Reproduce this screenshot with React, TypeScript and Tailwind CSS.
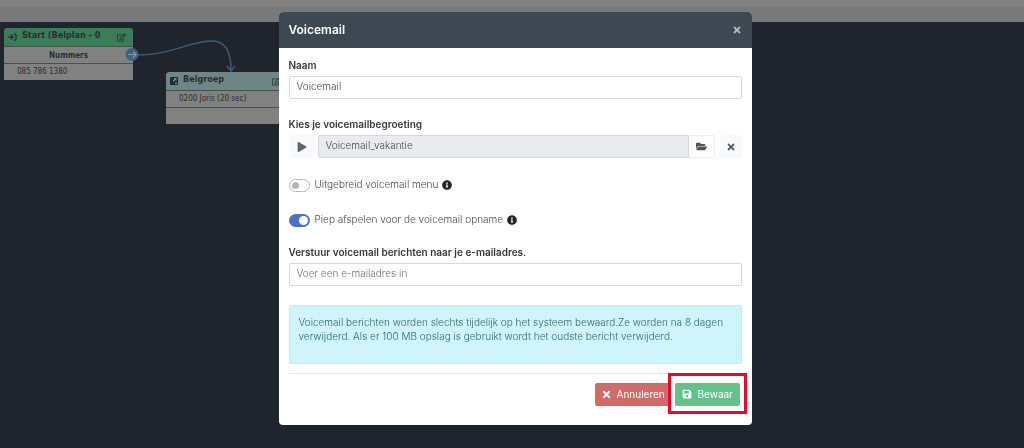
import React, { useState } from "react";
import { FaFolderOpen, FaInfoCircle, FaPlay, FaRegEdit, FaSave, FaTimes } from "react-icons/fa";

interface FlowNodeProps {
    title: string;
    icon: React.ReactNode;
    rows: string[];
    heading?: string;
    headerClass: string;
    className?: string;
}

function FlowNode({ title, icon, rows, heading, headerClass, className = "" }: FlowNodeProps) {
    return (
        <section className={`absolute overflow-hidden rounded-t-sm bg-[#818181] text-[#2a2e32] ${className}`}>
            <header className={`flex h-[18px] items-center gap-[5px] px-1 ${headerClass}`}>
                {icon}
                <h3 className="flex-1 truncate pb-0.5 text-[9px] font-bold">{title}</h3>
                <button type="button" aria-label={`${title} bewerken`} className="px-[3px]">
                    <FaRegEdit className="size-[9px]" />
                </button>
            </header>
            {heading && (
                <div className="h-[17px] border-t border-[#4c4f52] text-center text-[8px] leading-[17px] font-bold">{heading}</div>
            )}
            {rows.map((row, i) => (
                <div key={i} className="h-[17px] border-t border-[#4c4f52] pl-[13px] text-[8px] leading-4">
                    {row}
                </div>
            ))}
        </section>
    );
}

function StartIcon() {
    return (
        <svg viewBox="0 0 18 16" className="h-2 w-[9px] shrink-0" fill="none" stroke="currentColor" strokeWidth="2.5" aria-hidden="true">
            <path d="M0 8h10M5 3l5 5l-5 5M11 2h3a2 2 0 0 1 2 2v8a2 2 0 0 1-2 2h-3" />
        </svg>
    );
}

function GroupIcon() {
    return (
        <svg viewBox="0 0 16 16" className="size-2 shrink-0" aria-hidden="true">
            <rect width="16" height="16" rx="2" fill="#1d2a2e" />
            <path d="M13 2v6l-2-2l-4 4l-2-2l4-4l-2-2z" fill="#6f8f8e" />
            <path d="M10 11h4v3h-4z" fill="#6f8f8e" />
        </svg>
    );
}

function FlowCanvas() {
    return (
        <div className="relative flex-1 overflow-hidden bg-[#20252d] font-['DejaVu_Sans_Condensed','DejaVu_Sans',sans-serif]">
            <FlowNode
                title="Start (Belplan - 0"
                icon={<StartIcon />}
                heading="Nummers"
                rows={["085 786 1380"]}
                headerClass="bg-[#3b7d58]"
                className="top-[6px] left-1 w-[129px]"
            />
            <FlowNode
                title="Belgroep"
                icon={<GroupIcon />}
                rows={["0200 Joris (20 sec)", ""]}
                headerClass="bg-[#6c8785]"
                className="top-[50px] left-[166px] w-[122px]"
            />
            <svg className="absolute top-0 left-0 h-[60px] w-[280px]" fill="none" aria-hidden="true">
                <path d="M138 33C172 33 190 19 212 19C226 19 231 31 231 48" stroke="#3c5a7c" strokeWidth="1.5" />
                <path d="M227 44l4 5l4-5" stroke="#3c5a7c" strokeWidth="1.5" />
                <circle cx="132" cy="32.5" r="6.5" fill="#40607f" />
                <path d="M128 32.5h8M133 29.5l3 3l-3 3" stroke="#8798a8" strokeWidth="1.2" />
            </svg>
        </div>
    );
}

interface SwitchRowProps {
    id: string;
    label: string;
    checked: boolean;
    onChange: (checked: boolean) => void;
}

function SwitchRow({ id, label, checked, onChange }: SwitchRowProps) {
    return (
        <div className="flex h-4 items-center">
            <input
                id={id}
                type="checkbox"
                role="switch"
                checked={checked}
                onChange={(e) => onChange(e.target.checked)}
                className="h-[13px] w-[21px] shrink-0 appearance-none rounded-full border border-[#b5b8bb] bg-white before:m-[2px] before:block before:size-[7px] before:rounded-full before:bg-[#b5b5b5] checked:border-[#4c6fc9] checked:bg-[#4c6fc9] checked:before:m-px checked:before:ml-[9px] checked:before:size-[9px] checked:before:bg-white"
            />
            <label htmlFor={id} className="pb-[3px] pl-[5px]">
                {label}
            </label>
            <FaInfoCircle className="ml-1 size-[10px] text-[#212529]" />
        </div>
    );
}

const labelClass = "block font-semibold text-[#33383d]";
const inputClass = "block h-[23px] w-full rounded-xs border border-[#d5d8db] bg-white px-[7px] pb-[3px] text-[#44484c] outline-none placeholder:text-[#6b7076]";

function VoicemailDialog() {
    const [name, setName] = useState("Voicemail");
    const [email, setEmail] = useState("");
    const [extended, setExtended] = useState(false);
    const [beep, setBeep] = useState(true);

    return (
        <form
            role="dialog"
            aria-labelledby="dialog-title"
            className="w-full max-w-[473px] overflow-hidden rounded-sm bg-white text-[10px] leading-[14px] font-light text-[#44484c]"
        >
            <header className="flex h-9 items-center justify-between bg-[#3e4853] px-[10px]">
                <h2 id="dialog-title" className="text-[12px] font-semibold text-white">Voicemail</h2>
                <button type="button" aria-label="Sluiten" className="text-[#b9bec4]">
                    <FaTimes className="size-[10px]" />
                </button>
            </header>

            <div className="px-[10px] pt-[10px]">
                <label htmlFor="name" className={labelClass}>Naam</label>
                <input id="name" className={`mt-1 ${inputClass}`} value={name} onChange={(e) => setName(e.target.value)} />

                <label htmlFor="greeting" className={`mt-[18px] ${labelClass}`}>Kies je voicemailbegroeting</label>
                <div className="mt-1 flex h-[23px]">
                    <button type="button" aria-label="Afspelen" className="mr-[3px] flex w-[26px] items-center justify-center rounded-xs bg-[#f8f9fa] text-[#5f656b]">
                        <FaPlay className="size-[10px]" />
                    </button>
                    <input
                        id="greeting"
                        readOnly
                        value="Voicemail_vakantie"
                        className="min-w-0 flex-1 rounded-l-xs border border-[#d3d6da] bg-[#e9ebef] px-[7px] pb-[3px] text-[#44484c] outline-none"
                    />
                    <button type="button" aria-label="Bestand kiezen" className="flex w-[26px] items-center justify-center rounded-r-xs border border-l-0 border-[#eceef0] bg-[#fdfdfd] text-[#50555a]">
                        <FaFolderOpen className="size-[11px]" />
                    </button>
                    <button type="button" aria-label="Wissen" className="ml-[5px] flex w-[22px] items-center justify-center rounded-xs bg-[#f8f9fa] text-[#50555a]">
                        <FaTimes className="size-[10px]" />
                    </button>
                </div>

                <div className="mt-[19px] flex flex-col gap-[19px]">
                    <SwitchRow id="extended" label="Uitgebreid voicemail menu" checked={extended} onChange={setExtended} />
                    <SwitchRow id="beep" label="Piep afspelen voor de voicemail opname" checked={beep} onChange={setBeep} />
                </div>

                <label htmlFor="email" className={`mt-[17px] ${labelClass}`}>Verstuur voicemail berichten naar je e-mailadres.</label>
                <input
                    id="email"
                    type="email"
                    placeholder="Voer een e-mailadres in"
                    className={`mt-1 ${inputClass}`}
                    value={email}
                    onChange={(e) => setEmail(e.target.value)}
                />

                <p className="mt-[19px] min-h-[59px] rounded-xs border border-[#bfecf5] bg-[#cff4fc] pt-[9px] pr-1 pl-[9px] text-[#2c6873]">
                    Voicemail berichten worden slechts tijdelijk op het systeem bewaard.Ze worden na 8 dagen verwijderd. Als er 100 MB opslag is gebruikt wordt het oudste bericht verwijderd.
                </p>
                <hr className="mt-[9px] border-[#e3e5e7]" />
            </div>

            <footer className="flex justify-end gap-1 px-3 pt-[9px] pb-[19px] font-normal text-white">
                <button type="button" className="flex h-[23px] w-[76px] items-center gap-[5px] rounded-xs bg-[#d26a68] pb-px pl-[6px]">
                    <FaTimes className="size-[11px]" />
                    Annuleren
                </button>
                <div className="relative">
                    <button type="submit" className="flex h-[23px] w-[65px] items-center gap-[6px] rounded-xs bg-[#62c28c] pb-px pl-[7px]">
                        <FaSave className="size-[10px]" />
                        Bewaar
                    </button>
                    <span className="pointer-events-none absolute -inset-x-[7px] -top-[10px] -bottom-2 border-3 border-[#e00b2d]" aria-hidden="true" />
                </div>
            </footer>
        </form>
    );
}

export default function App() {
    return (
        <div className="flex min-h-screen flex-col font-['Inter','Liberation_Sans',sans-serif]">
            <div className="h-[7px] bg-[#81807e]" />
            <div className="h-[15px] bg-[#77797a]" />
            <FlowCanvas />
            <div className="fixed inset-0 flex items-start justify-center overflow-auto pt-3 pl-1.5">
                <VoicemailDialog />
            </div>
        </div>
    );
}
